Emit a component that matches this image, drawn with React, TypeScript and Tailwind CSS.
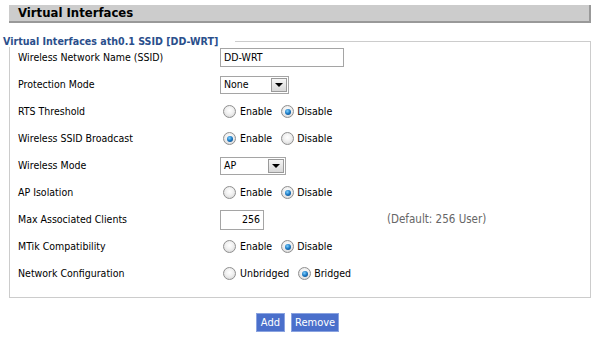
import React from "react";

const font = { fontFamily: '"DejaVu Sans Condensed", Tahoma, "DejaVu Sans", sans-serif' };

function Radio({ checked }: { checked?: boolean }) {
  return (
    <span className="relative inline-block w-[13px] h-[13px] rounded-full border border-[#8f8f8f] bg-[radial-gradient(circle_at_50%_40%,#ffffff_0%,#f0f0f0_45%,#cfcfcf_100%)] shrink-0">
      {checked && (
        <span className="absolute left-[2.5px] top-[2.5px] w-[6px] h-[6px] rounded-full bg-[radial-gradient(circle_at_40%_35%,#7fd0ff_0%,#1a78c2_50%,#0b3b73_100%)]" />
      )}
    </span>
  );
}

function RadioPair({ a, b, sel }: { a: string; b: string; sel: 0 | 1 }) {
  return (
    <div className="flex items-center">
      <span className="ml-[3px] flex items-center">
        <Radio checked={sel === 0} />
        <span className="ml-[4px]">{a}</span>
      </span>
      <span className="ml-[9px] flex items-center">
        <Radio checked={sel === 1} />
        <span className="ml-[3px]">{b}</span>
      </span>
    </div>
  );
}

function Select({ value, width }: { value: string; width: string }) {
  return (
    <div className={`flex items-center h-[18px] border border-[#a5a5a5] bg-white ${width}`}>
      <span className="pl-[3px] flex-1 leading-none">{value}</span>
      <span className="w-[16px] h-[14px] mr-[1px] border border-[#9a9a9a] bg-gradient-to-b from-[#f6f6f6] to-[#d8d8d8] flex items-center justify-center">
        <span className="block w-0 h-0 border-l-[4px] border-r-[4px] border-t-[4px] border-l-transparent border-r-transparent border-t-black" />
      </span>
    </div>
  );
}

function Row({ label, children }: { label: string; children: React.ReactNode }) {
  return (
    <div className="flex items-center h-[27px]">
      <div className="w-[202px] shrink-0">{label}</div>
      <div className="flex items-center flex-1">{children}</div>
    </div>
  );
}

export default function App() {
  return (
    <div className="w-[594px] h-[343px] bg-white text-[10.5px] text-black pt-[5px]" style={font}>
      <div className="ml-[9px] mr-[3px] h-[18px] bg-[#cccccc] border-b-2 border-r-2 border-[#999999] flex items-center pl-[9px]">
        <span className="font-bold text-[13px] text-[#000]">Virtual Interfaces</span>
      </div>
      <fieldset className="ml-[9px] mr-[3px] mt-[12px] border border-[#cccccc] pl-[8px] pt-0 pb-[10px]">
        <legend className="-ml-[15px] pr-[17px] font-bold text-[10.6px] text-[#2b4f8c] leading-[12px]">
          Virtual Interfaces ath0.1 SSID [DD-WRT]
        </legend>
        <div className="-mt-[3px]">
          <Row label="Wireless Network Name (SSID)">
            <div className="w-[124px] h-[19px] border border-[#a5a5a5] flex items-center pl-[3px]">DD-WRT</div>
          </Row>
          <Row label="Protection Mode">
            <Select value="None" width="w-[69px]" />
          </Row>
          <Row label="RTS Threshold">
            <RadioPair a="Enable" b="Disable" sel={1} />
          </Row>
          <Row label="Wireless SSID Broadcast">
            <RadioPair a="Enable" b="Disable" sel={0} />
          </Row>
          <Row label="Wireless Mode">
            <Select value="AP" width="w-[66px]" />
          </Row>
          <Row label="AP Isolation">
            <RadioPair a="Enable" b="Disable" sel={1} />
          </Row>
          <Row label="Max Associated Clients">
            <div className="w-[44px] h-[20px] border border-[#a5a5a5] flex items-center justify-end pr-[3px]">256</div>
            <span className="ml-[123px] text-[11.5px] text-[#666666]">(Default: 256 User)</span>
          </Row>
          <Row label="MTik Compatibility">
            <RadioPair a="Enable" b="Disable" sel={1} />
          </Row>
          <Row label="Network Configuration">
            <RadioPair a="Unbridged" b="Bridged" sel={1} />
          </Row>
        </div>
      </fieldset>
      <div className="flex justify-center gap-[6px] mt-[15px] pl-[1px]">
        <button className="h-[19px] px-[4px] bg-[#4a6fcb] text-white border border-[#8aa3e0] text-[11px] leading-none">Add</button>
        <button className="h-[19px] px-[3px] bg-[#4a6fcb] text-white border border-[#8aa3e0] text-[11px] leading-none">Remove</button>
      </div>
    </div>
  );
}
